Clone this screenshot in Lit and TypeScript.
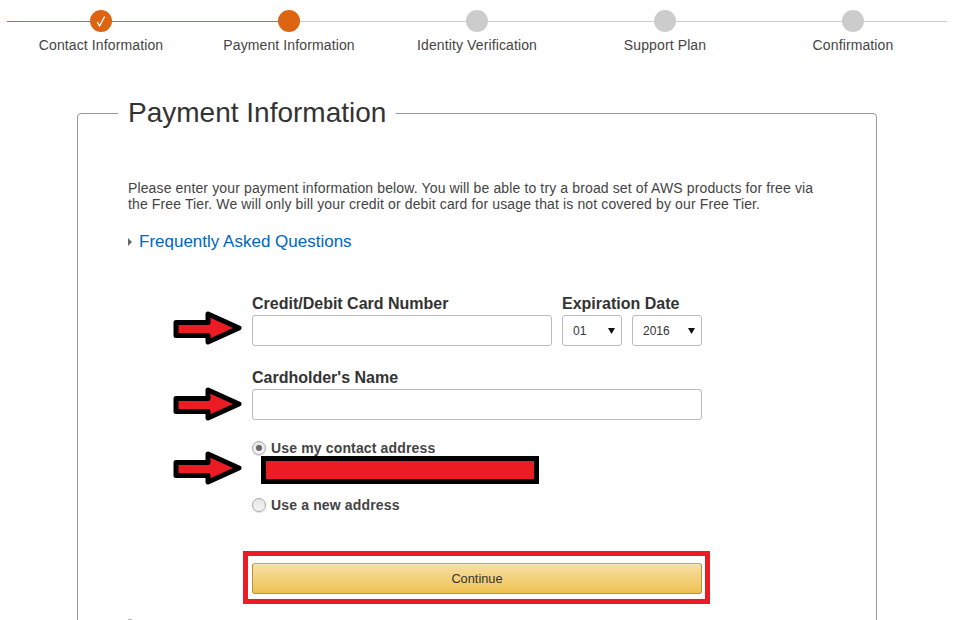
import { LitElement, html, css, svg } from "lit";
import { customElement } from "lit/decorators.js";

const STEPS = ["Contact Information", "Payment Information", "Identity Verification", "Support Plan", "Confirmation"];
const ARROW_TOPS = [310, 386, 450];

@customElement("app-root")
export class AppRoot extends LitElement {
  static styles = css`
    :host { display: block; position: relative; height: 620px; overflow: hidden; background: #fff; font-family: "Liberation Sans", Arial, sans-serif; color: #333; }
    * { box-sizing: border-box; }
    .stepper { display: grid; grid-template-columns: repeat(5, 188px); padding: 10px 7px 0; }
    .step { display: flex; flex-direction: column; align-items: center; }
    .track { display: flex; align-items: center; width: 100%; }
    .seg { flex: 1; height: 1px; background: #ccc; }
    .seg.done { background: #dd6511; }
    .dot { width: 22px; height: 22px; border-radius: 50%; background: #ccc; display: flex; align-items: center; justify-content: center; }
    .dot.done { background: #dd6511; }
    .step-label { margin-top: 5px; font-size: 14px; line-height: 16px; letter-spacing: 0.12px; color: #444; white-space: nowrap; }
    fieldset { width: 800px; margin: 44px 0 0 77px; padding: 0; border: 1px solid #999; border-radius: 4px; height: 600px; min-width: 0; }
    legend { margin-left: 40px; padding: 0 10px; font-size: 28px; font-weight: 400; line-height: 32px; color: #333; }
    .content { padding: 51px 50px 0 50px; }
    .intro { margin: 0; width: 700px; font-size: 14px; line-height: 16px; letter-spacing: 0.13px; color: #444; }
    .faq { display: flex; align-items: center; gap: 7px; margin-top: 20px; font-size: 17px; line-height: 20px; color: #0066c0; }
    .tri { width: 0; height: 0; border-left: 4px solid #666; border-top: 4px solid transparent; border-bottom: 4px solid transparent; }
    form { display: flex; flex-direction: column; margin: 43px 0 0 124px; width: 450px; }
    .row { display: flex; gap: 10px; }
    .field { display: flex; flex-direction: column; }
    .field label { font-size: 16px; font-weight: 700; line-height: 18px; color: #333; margin-bottom: 2px; }
    .input { height: 31px; border: 1px solid #bbb; border-radius: 3px; background: #fff; padding: 0 8px; font: 14px "Liberation Sans", Arial, sans-serif; }
    .w300 { width: 300px; }
    .w450 { width: 450px; }
    .name { margin-top: 23px; }
    .select { position: relative; height: 31px; }
    .select select { appearance: none; -webkit-appearance: none; display: block; width: 100%; height: 100%; border: 1px solid #bbb; border-radius: 3px; background: #fff; padding: 0 0 0 10px; font: 12px "Liberation Sans", Arial, sans-serif; color: #333; }
    .caret { position: absolute; right: 7px; top: 13px; pointer-events: none; display: block; }
    .m { width: 60px; }
    .y { width: 70px; }
    .radio { display: flex; align-items: center; gap: 5px; font-size: 14px; font-weight: 700; line-height: 16px; letter-spacing: 0.15px; color: #444; }
    .mark { width: 14px; height: 14px; border-radius: 50%; border: 1px solid #aaa; background: linear-gradient(#e4e4e4, #f6f6f6); display: flex; align-items: center; justify-content: center; box-shadow: 0 1px 1px #ddd; }
    .mark i { width: 6px; height: 6px; border-radius: 50%; background: #666; }
    .r1 { margin-top: 20px; }
    .address { height: 41px; }
    button { margin-top: 50px; width: 450px; height: 31px; border: 1px solid #b8923a; border-top-color: #bfa06a; border-radius: 3px; background: linear-gradient(#f7dfa5, #eec252); box-shadow: inset 0 1px 0 #fae7bd; font: 12.8px "Liberation Sans", Arial, sans-serif; color: #333; padding: 0; }
    .more { margin-top: 25px; width: 4px; height: 4px; background: #bbb; }
    .arrow { position: absolute; left: 170px; width: 76px; height: 36px; display: block; }
    .redact { position: absolute; left: 261px; top: 456px; width: 278px; height: 28px; border: 5px solid #000; background: #ed1c24; }
    .frame { position: absolute; left: 243px; top: 551px; width: 467px; height: 53px; border: 5px solid #ed1c24; }
  `;

  private stepTpl(label: string, i: number) {
    const done = i <= 1;
    const left = i <= 1;
    const right = i === 0;
    return html`<div class="step">
      <div class="track">
        <span class="seg ${left ? "done" : ""}"></span>
        <span class="dot ${done ? "done" : ""}">
          ${i === 0
            ? html`<svg width="12" height="13" viewBox="0 0 12 13"><path d="M2.2 7.2 L4.6 11 L9.6 1.6" fill="none" stroke="#fff" stroke-width="1.3"/></svg>`
            : ""}
        </span>
        <span class="seg ${right ? "done" : ""}"></span>
      </div>
      <div class="step-label">${label}</div>
    </div>`;
  }

  private arrowTpl(top: number) {
    return html`<svg class="arrow" style="top:${top}px" viewBox="0 0 76 36">
      ${svg`<polygon points="6,12.5 38,12.5 38,4 69,18 38,32 38,25.5 6,25.5" fill="#ed1c24" stroke="#000" stroke-width="5" stroke-linejoin="round"/>`}
    </svg>`;
  }

  private selectTpl(cls: string, value: string) {
    return html`<div class="select ${cls}">
      <select><option>${value}</option></select>
      <svg class="caret" width="7" height="6" viewBox="0 0 7 6"><path d="M0 0 H7 L3.5 6 Z" fill="#111"/></svg>
    </div>`;
  }

  render() {
    return html`
      <div class="stepper">${STEPS.map((s, i) => this.stepTpl(s, i))}</div>
      <fieldset>
        <legend>Payment Information</legend>
        <div class="content">
          <p class="intro">Please enter your payment information below. You will be able to try a broad set of AWS products for free via the Free Tier. We will only bill your credit or debit card for usage that is not covered by our Free Tier.</p>
          <div class="faq"><span class="tri"></span><span>Frequently Asked Questions</span></div>
          <form>
            <div class="row">
              <div class="field">
                <label>Credit/Debit Card Number</label>
                <input class="input w300" />
              </div>
              <div class="field">
                <label>Expiration Date</label>
                <div class="row">${this.selectTpl("m", "01")}${this.selectTpl("y", "2016")}</div>
              </div>
            </div>
            <div class="field name">
              <label>Cardholder's Name</label>
              <input class="input w450" />
            </div>
            <div class="radio r1"><span class="mark"><i></i></span>Use my contact address</div>
            <div class="address"></div>
            <div class="radio"><span class="mark"></span>Use a new address</div>
            <button type="button">Continue</button>
          </form>
          <div class="more"></div>
        </div>
      </fieldset>
      ${ARROW_TOPS.map((t) => this.arrowTpl(t))}
      <div class="redact"></div>
      <div class="frame"></div>
    `;
  }
}
